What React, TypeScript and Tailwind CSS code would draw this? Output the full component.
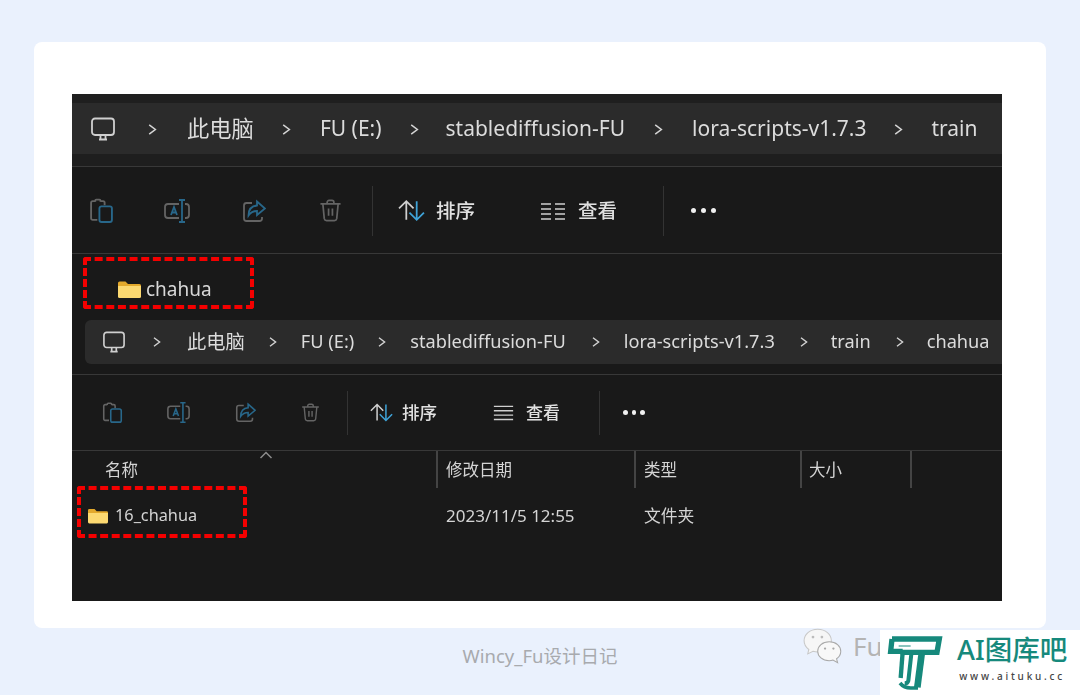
const font = "font-['Noto_Sans','Noto_Sans_CJK_SC',sans-serif]";

function Monitor({ size }: { size: number }) {
  return (
    <svg width={size} height={size} viewBox="0 0 24 24" fill="none" stroke="#cfcfcf" strokeWidth="1.8" className="shrink-0">
      <rect x="1" y="1.5" width="22" height="16.5" rx="3" />
      <path d="M8 22.5h8M9.5 18.5v3.5M14.5 18.5v3.5" />
    </svg>
  );
}

function Chevron({ size }: { size: number }) {
  return (
    <svg width={size} height={size} viewBox="0 0 10 10" fill="none" stroke="#d4d4d4" strokeWidth="1.4" className="shrink-0">
      <path d="M2 .8 7.6 5 2 9.2" />
    </svg>
  );
}

function Paste({ size }: { size: number }) {
  return (
    <svg width={size} height={size} viewBox="0 0 24 24" fill="none" strokeWidth="1.8" className="shrink-0">
      <path d="M8 21H3.500A1.500 1.500 0 0 1 2 19.500V4.500A1.500 1.500 0 0 1 3.500 3H6M11 3h2.500A1.500 1.500 0 0 1 15 4.500V7M6 3.500V2.500C6 1.800 6.500 1.500 7 1.500h3c.5 0 1 .3 1 1v1" stroke="#646464" />
      <rect x="10" y="8" width="12" height="15" rx="2" stroke="#28678a" />
    </svg>
  );
}

function Rename({ size }: { size: number }) {
  return (
    <svg width={size} height={size} viewBox="0 0 26 24" fill="none" strokeWidth="1.8" className="shrink-0">
      <path d="M15 5H4a3 3 0 0 0-3 3v8a3 3 0 0 0 3 3h11M21 5h1a3 3 0 0 1 3 3v8a3 3 0 0 1-3 3h-1" stroke="#646464" />
      <path d="M15 1h6M15 23h6M18 1v22M7 16l3-8 3 8M8 13.500h4" stroke="#28678a" />
    </svg>
  );
}

function Share({ size }: { size: number }) {
  return (
    <svg width={size} height={size} viewBox="0 0 24 24" fill="none" strokeWidth="1.8" className="shrink-0">
      <path d="M10 4H4.500A2.500 2.500 0 0 0 2 6.500v13A2.500 2.500 0 0 0 4.500 22h13a2.500 2.500 0 0 0 2.500-2.500V18" stroke="#646464" />
      <path d="M15 2.500 23 9.500 15 16v-4c-4 0-6.500 1.500-8.500 4.500 0-5.500 3-9.500 8.500-10z" stroke="#28678a" />
    </svg>
  );
}

function Trash({ size }: { size: number }) {
  return (
    <svg width={size} height={size} viewBox="0 0 24 24" fill="none" stroke="#646464" strokeWidth="1.8" className="shrink-0">
      <path d="M1.500 5h21M8.500 5V3.500a2 2 0 0 1 2-2h3a2 2 0 0 1 2 2V5M4 5l1.500 15.500a2.500 2.500 0 0 0 2.500 2h8a2.500 2.500 0 0 0 2.500-2L20 5M10 10v7.500M14 10v7.500" />
    </svg>
  );
}

function Sort({ size }: { size: number }) {
  return (
    <svg width={size} height={size} viewBox="0 0 26 24" fill="none" strokeWidth="1.700" className="shrink-0">
      <path d="M8 21V3M1 10l7-7 7 7" stroke="#d0d0d0" />
      <path d="M18 3v18M11 14l7 7 7-7" stroke="#3fa3d8" />
    </svg>
  );
}

function Details({ size }: { size: number }) {
  return (
    <svg width={size} height={size} viewBox="0 0 26 24" fill="none" stroke="#d0d0d0" strokeWidth="1.500" className="shrink-0">
      <path d="M1 5h10M1 10h10M1 15h10M1 20h10M15 5h10M15 10h10M15 15h10M15 20h10" />
    </svg>
  );
}

function ListLines({ size }: { size: number }) {
  return (
    <svg width={size} height={size} viewBox="0 0 24 24" fill="none" stroke="#d0d0d0" strokeWidth="1.700" className="shrink-0">
      <path d="M1 5h22M1 10h22M1 15h22M1 20h22" />
    </svg>
  );
}

function Dots({ className, dot }: { className: string; dot: string }) {
  return (
    <div className={`flex ${className}`}>
      <span className={`rounded-full bg-[#f0f0f0] ${dot}`} />
      <span className={`rounded-full bg-[#f0f0f0] ${dot}`} />
      <span className={`rounded-full bg-[#f0f0f0] ${dot}`} />
    </div>
  );
}

function Folder({ w, h }: { w: number; h: number }) {
  return (
    <svg width={w} height={h} viewBox="0 0 23 17" className="shrink-0">
      <path d="M0 2a1.500 1.500 0 0 1 1.500-1.500h6L10 3h11.500A1.500 1.500 0 0 1 23 4.500V6H0z" fill="#e3a92c" />
      <path d="M0 5h23v10.500a1.500 1.500 0 0 1-1.500 1.500h-20A1.500 1.500 0 0 1 0 15.500z" fill="#fcd971" />
    </svg>
  );
}

function Redbox({ className }: { className: string }) {
  return <div className={`absolute rounded-[3px] border-[4px] border-dashed border-[#f40000] ${className}`} />;
}

function WeChat() {
  return (
    <svg width="44" height="38" viewBox="0 0 42 36" className="absolute left-[802px] top-[627px] blur-[0.3px]">
      <path d="M15 2C7.500 2 2 7 2 13c0 3.500 1.800 6.300 4.500 8.300L5.500 25.500l5-2.500c1.500.5 3 .7 4.500.7 7.500 0 13-4.800 13-10.700S22.500 2 15 2z" fill="#f6f6f6" stroke="#c8c8c8" />
      <path d="M26 14c-6.500 0-11 4-11 9s4.500 9 11 9c1.200 0 2.500-.2 3.600-.6l4.400 2.600-1-3.800c2.500-1.700 4-4.200 4-7.200 0-5-4.500-9-11-9z" fill="#f8f8f8" stroke="#a8a8a8" />
      <circle cx="10.500" cy="9.500" r="1.300" fill="#bcbcbc" />
      <circle cx="19" cy="9.500" r="1.300" fill="#bcbcbc" />
      <circle cx="22" cy="20.500" r="1.100" fill="#a8a8a8" />
      <circle cx="30" cy="20.500" r="1.100" fill="#a8a8a8" />
    </svg>
  );
}

function Logo() {
  return (
    <div className="absolute left-[880px] top-[630px] flex h-[65px] w-[200px] bg-white">
      <svg width="77" height="65" viewBox="0 6 231 195" fill="none" stroke="#16897c" className="shrink-0">
        <path d="M36 33H178L171 73H62" strokeWidth="16" />
        <path d="M36 33 32 70H68" strokeWidth="16" />
        <path d="M68 72 62 150" strokeWidth="13" />
        <path d="M94 78 85 158Q83 166 74 166" strokeWidth="12" />
        <path d="M125 78 112 178" strokeWidth="20" />
        <path d="M114 180H92Q72 180 60 165" strokeWidth="11" />
        <path d="M56 54H92" strokeWidth="3" />
      </svg>
      <div className="flex flex-col items-center">
        <span className="mt-[2px] text-[27.500px] leading-[36px] font-medium whitespace-nowrap text-[#16897c]">AI图库吧</span>
        <span className="mt-[1px] text-[10px] leading-[14px] font-medium tracking-[2.800px] whitespace-nowrap text-[#444]">www.aituku.cc</span>
      </div>
    </div>
  );
}

export default function App() {
  return (
    <div className={`relative h-[695px] w-[1080px] overflow-hidden bg-[#eaf1fd] pt-[42px] pl-[34px] ${font}`}>
      <div className="h-[586px] w-[1012px] rounded-[8px] bg-white pt-[52px] pl-[38px]">
        <div className="relative h-[507px] w-[930px] overflow-hidden bg-[#191919] blur-[0.6px]">
          {/* top address bar */}
          <div className="h-[9px] bg-[#1f1f1f]" />
          <div className="flex h-[51px] items-center bg-[#2b2b2b] pt-[1px] pl-[19px] text-[21px] text-[#dcdcdc]">
            <Monitor size={24} />
            <div className="ml-[32px] flex items-center">
              <Chevron size={11} />
              <span className="ml-[29px] text-[22.300px]">此电脑</span>
              <div className="ml-[27px]"><Chevron size={11} /></div>
              <span className="ml-[28px]">FU (E:)</span>
              <div className="ml-[27px]"><Chevron size={11} /></div>
              <span className="ml-[26px]">stablediffusion-FU</span>
              <div className="ml-[28px]"><Chevron size={11} /></div>
              <span className="ml-[28px]">lora-scripts-v1.7.3</span>
              <div className="ml-[26px]"><Chevron size={11} /></div>
              <span className="ml-[28px]">train</span>
            </div>
          </div>
          <div className="h-[13px] border-b border-[#383838] bg-[#1e1e1e]" />

          {/* top toolbar */}
          <div className="flex h-[87px] items-center border-b border-[#383838] pt-[1px] pl-[17px] text-[#e0e0e0]">
            <Paste size={25} />
            <div className="ml-[50px]"><Rename size={26} /></div>
            <div className="ml-[52px]"><Share size={24} /></div>
            <div className="ml-[53px]"><Trash size={23} /></div>
            <div className="ml-[30px] h-[50px] w-px bg-[#333]" />
            <div className="ml-[25px]"><Sort size={27} /></div>
            <span className="ml-[11px] text-[19.500px] font-medium">排序</span>
            <div className="ml-[65px]"><Details size={26} /></div>
            <span className="ml-[12px] text-[19.500px] font-medium">查看</span>
            <div className="ml-[46px] h-[50px] w-px bg-[#333]" />
            <Dots className="ml-[27px] gap-[5px]" dot="size-[5px]" />
          </div>

          {/* chahua row */}
          <div className="flex h-[66px] items-center pt-[4px] pl-[46px] text-[19px] text-[#d8d8d8]">
            <Folder w={23} h={17} />
            <span className="ml-[5px]">chahua</span>
          </div>

          {/* second address bar */}
          <div className="ml-[13px] flex h-[44px] items-center rounded-l-[6px] bg-[#2b2b2b] pl-[18px] text-[18.200px] text-[#dcdcdc]">
            <Monitor size={22} />
            <div className="ml-[27px] flex items-center">
              <Chevron size={10} />
              <span className="ml-[25px] text-[19.300px]">此电脑</span>
              <div className="ml-[23px]"><Chevron size={10} /></div>
              <span className="ml-[23px]">FU (E:)</span>
              <div className="ml-[23px]"><Chevron size={10} /></div>
              <span className="ml-[23px]">stablediffusion-FU</span>
              <div className="ml-[25px]"><Chevron size={10} /></div>
              <span className="ml-[23px]">lora-scripts-v1.7.3</span>
              <div className="ml-[24px]"><Chevron size={10} /></div>
              <span className="ml-[22px]">train</span>
              <div className="ml-[24px]"><Chevron size={10} /></div>
              <span className="ml-[22px]">chahua</span>
            </div>
          </div>
          <div className="h-[11px] border-b border-[#383838]" />

          {/* second toolbar */}
          <div className="flex h-[76px] items-center border-b border-[#383838] pl-[30px] text-[#e0e0e0]">
            <Paste size={21} />
            <div className="ml-[44px]"><Rename size={23} /></div>
            <div className="ml-[45px]"><Share size={21} /></div>
            <div className="ml-[45px]"><Trash size={19} /></div>
            <div className="ml-[27px] h-[44px] w-px bg-[#333]" />
            <div className="ml-[22px]"><Sort size={23} /></div>
            <span className="ml-[9px] text-[17.500px] font-medium">排序</span>
            <div className="ml-[56px]"><ListLines size={21} /></div>
            <span className="ml-[12px] text-[17px] font-medium">查看</span>
            <div className="ml-[39px] h-[44px] w-px bg-[#333]" />
            <Dots className="ml-[23px] gap-[4px]" dot="size-[4.500px]" />
          </div>

          {/* file list header */}
          <div className="relative flex h-[37px] text-[16.500px] text-[#d4d4d4]">
            <span className="ml-[33px] w-[331px] pt-[7px]">名称</span>
            <div className="h-full w-[2px] bg-[#444]" />
            <span className="ml-[8px] w-[188px] pt-[7px]">修改日期</span>
            <div className="h-full w-[2px] bg-[#444]" />
            <span className="ml-[8px] w-[156px] pt-[7px]">类型</span>
            <div className="h-full w-[2px] bg-[#444]" />
            <span className="ml-[7px] w-[101px] pt-[7px]">大小</span>
            <div className="h-full w-[2px] bg-[#444]" />
            <svg width="14" height="8" viewBox="0 0 14 8" fill="none" stroke="#8c8c8c" strokeWidth="1.500" className="absolute top-0 left-[187px]">
              <path d="M1.500 7 7 1.500 12.500 7" />
            </svg>
          </div>

          {/* file row */}
          <div className="flex h-[54px] items-center pt-[1px] text-[17px] text-[#d4d4d4]">
            <div className="ml-[16px] flex w-[358px] items-center">
              <Folder w={20} h={16} />
              <span className="ml-[7px] text-[16.300px]">16_chahua</span>
            </div>
            <span className="w-[198px]">2023/11/5 12:55</span>
            <span className="text-[16.800px]">文件夹</span>
          </div>

          <Redbox className="top-[163px] left-[11px] h-[52px] w-[171px]" />
          <Redbox className="top-[392px] left-[5px] h-[52px] w-[170px]" />
        </div>
      </div>

      <div className="flex h-[55px] w-[1012px] items-center justify-center text-[18.500px] text-[#a8aaae]">Wincy_Fu设计日记</div>

      <WeChat />
      <span className="absolute top-[627px] left-[853px] text-[26px] text-[#b4b4b4]">Fu</span>
      <Logo />
    </div>
  );
}
